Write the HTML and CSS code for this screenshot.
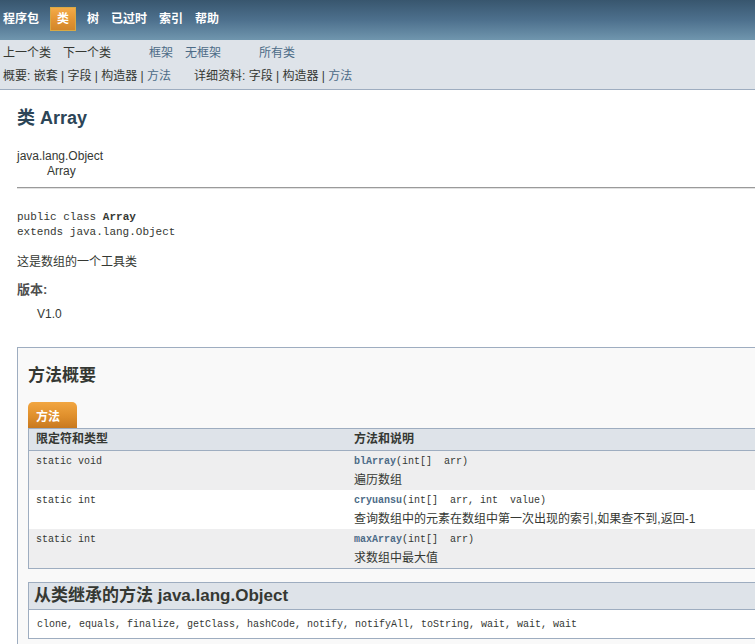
FILE: index.html
```html
<!DOCTYPE html>
<html lang="zh">
<head>
<meta charset="utf-8">
<title>Array</title>
<link rel="stylesheet" href="styles.css">
</head>
<body>
<div class="topNav">
  <ul class="navList">
    <li class="first"><a href="#">程序包</a></li>
    <li class="rev">类</li>
    <li><a href="#">树</a></li>
    <li><a href="#">已过时</a></li>
    <li><a href="#">索引</a></li>
    <li><a href="#">帮助</a></li>
  </ul>
</div>
<div class="subNav">
  <div class="row1">
    <ul class="navList">
      <li>上一个类</li>
      <li>下一个类</li>
    </ul>
    <ul class="navList">
      <li><a href="#">框架</a></li>
      <li><a href="#">无框架</a></li>
    </ul>
    <ul class="navList">
      <li><a href="#">所有类</a></li>
    </ul>
  </div>
  <div class="row2">
    <ul class="subNavList">
      <li>概要:&nbsp;嵌套&nbsp;|&nbsp;字段&nbsp;|&nbsp;构造器&nbsp;|&nbsp;<a href="#">方法</a></li>
    </ul>
    <ul class="subNavList">
      <li>详细资料:&nbsp;字段&nbsp;|&nbsp;构造器&nbsp;|&nbsp;<a href="#">方法</a></li>
    </ul>
  </div>
</div>
<div class="header">
  <h2 class="title">类 Array</h2>
</div>
<div class="contentContainer">
  <ul class="inheritance">
    <li>java.lang.Object</li>
    <li>
      <ul class="inheritance">
        <li>Array</li>
      </ul>
    </li>
  </ul>
  <hr class="rule">
  <pre class="decl">public class <b>Array</b>
extends java.lang.Object</pre>
  <div class="block">这是数组的一个工具类</div>
  <dl class="tags">
    <dt>版本:</dt>
    <dd>V1.0</dd>
  </dl>
  <div class="summaryBox">
    <h3 class="summaryTitle">方法概要</h3>
    <div class="tab">方法</div>
    <table class="memberSummary">
      <thead>
        <tr>
          <th class="colFirst">限定符和类型</th>
          <th class="colLast">方法和说明</th>
        </tr>
      </thead>
      <tbody>
        <tr class="altColor">
          <td class="colFirst"><code>static void</code></td>
          <td class="colLast"><code><a class="member" href="#">blArray</a>(int[]&nbsp; arr)</code><div class="desc">遍历数组</div></td>
        </tr>
        <tr class="rowColor">
          <td class="colFirst"><code>static int</code></td>
          <td class="colLast"><code><a class="member" href="#">cryuansu</a>(int[]&nbsp; arr, int&nbsp; value)</code><div class="desc">查询数组中的元素在数组中第一次出现的索引,如果查不到,返回-1</div></td>
        </tr>
        <tr class="altColor">
          <td class="colFirst"><code>static int</code></td>
          <td class="colLast"><code><a class="member" href="#">maxArray</a>(int[]&nbsp; arr)</code><div class="desc">求数组中最大值</div></td>
        </tr>
      </tbody>
    </table>
    <div class="inherited">
      <h3 class="inheritedTitle">从类继承的方法 java.lang.Object</h3>
      <div class="inheritedList"><code>clone, equals, finalize, getClass, hashCode, notify, notifyAll, toString, wait, wait, wait</code></div>
    </div>
  </div>
</div>
</body>
</html>
```
FILE: styles.css
```css
html, body {
  margin: 0;
  padding: 0;
  overflow: hidden;
}
body {
  font-family: "Liberation Sans", "Noto Sans CJK SC", sans-serif;
  font-size: 12px;
  color: #353833;
  background: #ffffff;
}
a {
  color: #4c6b87;
  text-decoration: none;
}
ul {
  list-style: none;
  margin: 0;
  padding: 0;
}

/* top navigation */
.topNav {
  height: 40px;
  box-sizing: border-box;
  padding-bottom: 2px;
  display: flex;
  align-items: center;
  background: linear-gradient(to bottom, #38566e 0%, #4d708d 50%, #7096ae 100%);
}
.topNav .navList {
  display: flex;
  align-items: center;
}
.topNav li {
  padding: 0 6px;
  line-height: 22px;
  color: #ffffff;
  font-weight: bold;
}
.topNav li a {
  color: #ffffff;
}
.topNav li.first {
  padding-left: 3px;
}
.topNav li.rev {
  margin: 0 5px;
  border: 1px solid #d8a945;
  background: linear-gradient(to bottom, #f4ab48 0%, #e59634 50%, #d2862a 100%);
}

/* sub navigation */
.subNav {
  background: #dee3e9;
  border-bottom: 1px solid #9eadc0;
  padding-left: 3px;
}
.row1 {
  display: flex;
  height: 25px;
  padding-top: 1px;
  box-sizing: border-box;
  align-items: center;
}
.row1 .navList {
  display: flex;
  gap: 12px;
  margin-right: 38px;
  line-height: 18px;
}
.row2 {
  display: flex;
  padding: 2px 0 4px;
  line-height: 18px;
}
.row2 .subNavList {
  margin-right: 23px;
}

/* header */
.header {
  padding: 10px 17px 0;
}
.title {
  margin: 8px 0 10px;
  font-size: 18px;
  line-height: 20px;
  font-weight: bold;
  color: #2c4557;
}

/* content */
.contentContainer {
  padding: 11px 0 0 17px;
}
.inheritance li {
  line-height: 15px;
}
.inheritance .inheritance {
  margin-left: 15px;
  padding-left: 15px;
}
.rule {
  height: 0;
  margin: 8px 0 0;
  border: 0;
  border-top: 1px solid #9a9a9a;
  border-bottom: 1px solid #e2e2e2;
}
.decl {
  margin: 21px 0 0;
  font-family: "Liberation Mono", "Noto Sans CJK SC", monospace;
  font-size: 11px;
  line-height: 15px;
  color: #353833;
}
.block {
  margin-top: 13px;
  line-height: 18px;
}
.tags {
  margin: 10px 0 0;
}
.tags dt {
  font-size: 13px;
  font-weight: bold;
  line-height: 18px;
  color: #4e4e4e;
}
.tags dd {
  margin: 6px 0 0 20px;
  line-height: 18px;
}

/* method summary box */
.summaryBox {
  margin: 24px -80px 0 0;
  border: 1px solid #9eadc0;
  background: #f9f9f9;
  padding: 0 0 20px 10px;
}
.summaryTitle {
  margin: 17px 0 0;
  font-size: 17px;
  line-height: 22px;
  font-weight: bold;
  color: #353833;
}
.tab {
  margin-top: 15px;
  width: 49px;
  height: 26px;
  box-sizing: border-box;
  padding: 6px 0 0 8px;
  line-height: 18px;
  border-radius: 5px 5px 0 0;
  background: linear-gradient(to bottom, #f2a641 0%, #df8f2c 55%, #c8791f 100%);
  color: #ffffff;
  font-weight: bold;
}
.memberSummary {
  width: 100%;
  table-layout: fixed;
  border-collapse: separate;
  border-spacing: 0;
  border-top: 1px solid #9eadc0;
  border-left: 1px solid #9eadc0;
  border-bottom: 1px solid #9eadc0;
}
.memberSummary th {
  background: #dee3e9;
  text-align: left;
  font-weight: bold;
  line-height: 21px;
  padding: 0 3px 0 7px;
  border-bottom: 1px solid #9eadc0;
  box-sizing: border-box;
}
.memberSummary th.colFirst {
  width: 318px;
}
.memberSummary td {
  padding: 1px 3px 0 7px;
  height: 38px;
  box-sizing: border-box;
  line-height: 19px;
  vertical-align: top;
  text-align: left;
}
.memberSummary code,
.inheritedList code {
  font-family: "Liberation Mono", "Noto Sans CJK SC", monospace;
  font-size: 10px;
  white-space: pre;
}
.memberSummary code {
  display: block;
  line-height: 19px;
  height: 19px;
}
.altColor {
  background: #eeeeef;
}
.rowColor {
  background: #ffffff;
}
.member {
  font-weight: bold;
  color: #4c6b87;
}
.desc {
  line-height: 19px;
  height: 19px;
}

/* inherited methods */
.inherited {
  margin-top: 13px;
}
.inheritedTitle {
  margin: 0;
  padding: 0 5px;
  border: 1px solid #9eadc0;
  background: #dee3e9;
  font-size: 17px;
  line-height: 26px;
  font-weight: bold;
  color: #353833;
}
.inheritedList {
  background: #ffffff;
  border: 1px solid #9eadc0;
  border-top: 0;
  padding: 0 8px;
  line-height: 26px;
}
```
